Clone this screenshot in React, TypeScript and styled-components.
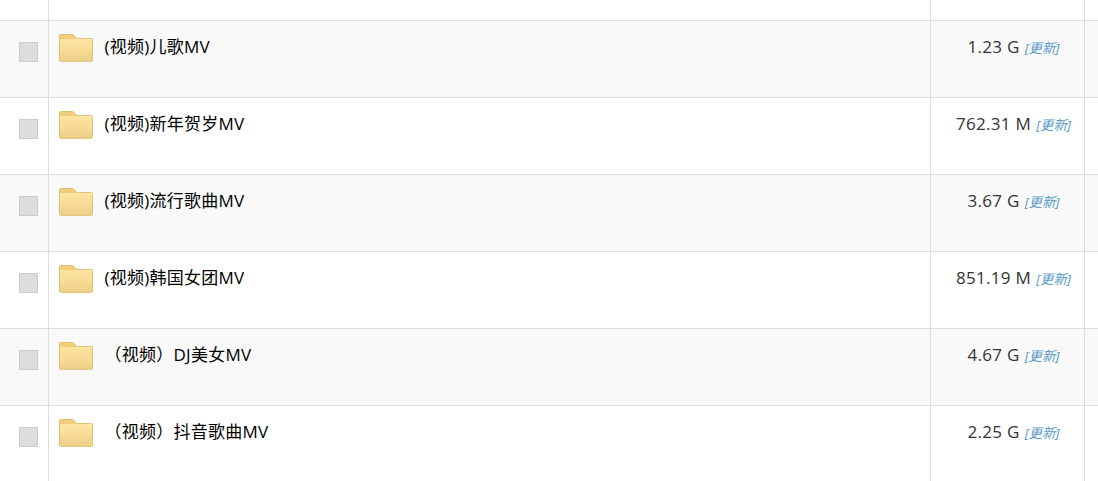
import styled, { createGlobalStyle } from "styled-components";

interface FolderRow {
    name: string;
    size: string;
}

const folders: FolderRow[] = [
    { name: "(视频)儿歌MV", size: "1.23 G" },
    { name: "(视频)新年贺岁MV", size: "762.31 M" },
    { name: "(视频)流行歌曲MV", size: "3.67 G" },
    { name: "(视频)韩国女团MV", size: "851.19 M" },
    { name: "（视频）DJ美女MV", size: "4.67 G" },
    { name: "（视频）抖音歌曲MV", size: "2.25 G" },
];

function FolderIcon() {
    return (
        <Folder width="34" height="28" viewBox="0 0 34 28">
            <defs>
                <linearGradient id="front" x1="0" y1="0" x2="0" y2="1">
                    <stop offset="0" stopColor="#fde4a1" />
                    <stop offset="0.5" stopColor="#f8db95" />
                    <stop offset="1" stopColor="#eccf88" />
                </linearGradient>
            </defs>
            <path d="M0.5 26V1.5Q0.5 0.5 1.5 0.5H13.2Q14 0.5 14.8 1.3L17.8 4.5H32.5Q33.5 4.5 33.5 5.5V26Q33.5 27.3 32.3 27.3H1.7Q0.5 27.3 0.5 26Z" fill="#eecf77" />
            <path d="M1 5.4H15.8L17.5 5H33V27H1Z" fill="url(#front)" />
            <path d="M1 5.9H16L18 5.5H33" fill="none" stroke="#fde8a8" />
            <path d="M0.5 26V1.5Q0.5 0.5 1.5 0.5H13.2Q14 0.5 14.8 1.3L17.8 4.5H32.5Q33.5 4.5 33.5 5.5V26Q33.5 27.3 32.3 27.3H1.7Q0.5 27.3 0.5 26Z" fill="none" stroke="#e2c078" />
        </Folder>
    );
}

export default function App() {
    return (
        <FileTable>
            <GlobalStyle />
            <Row $short>
                <CheckCell />
                <NameCell />
                <SizeCell />
                <EndCell />
            </Row>
            {folders.map((folder, i) => (
                <Row key={folder.name} $striped={i % 2 === 0}>
                    <CheckCell>
                        <Checkbox />
                    </CheckCell>
                    <NameCell>
                        <FolderIcon />
                        <FolderName>{folder.name}</FolderName>
                    </NameCell>
                    <SizeCell>
                        <SizeText>{folder.size}</SizeText>
                        <Refresh>[更新]</Refresh>
                    </SizeCell>
                    <EndCell />
                </Row>
            ))}
        </FileTable>
    );
}

const GlobalStyle = createGlobalStyle`
    body {
        margin: 0;
        background: #fff;
        overflow: hidden;
        font-family: "Open Sans", "Noto Sans CJK SC", sans-serif;
    }
    * {
        box-sizing: border-box;
    }
`;
const FileTable = styled.div`
    width: 100%;
    height: 481px;
    overflow: hidden;
`;
const Row = styled.div<{ $striped?: boolean; $short?: boolean }>`
    display: grid;
    grid-template-columns: 49px 882px 154px 1fr;
    height: ${(p) => (p.$short ? 21 : 77)}px;
    border-bottom: 1px solid #ddd;
    background: ${(p) => (p.$striped ? "#f9f9f9" : "#fff")};
`;
const Cell = styled.div`
    display: flex;
    align-items: flex-start;
    border-right: 1px solid #ddd;
`;
const CheckCell = styled(Cell)`
    padding: 21px 0 0 19px;
`;
const NameCell = styled(Cell)`
    padding: 13px 0 0 10px;
`;
const SizeCell = styled(Cell)`
    justify-content: center;
    padding: 13px 0 0 12px;
    white-space: nowrap;
`;
const EndCell = styled.div``;
const Checkbox = styled.span`
    width: 19px;
    height: 20px;
    border: 1px solid #ccc;
    background: #ddd;
`;
const Folder = styled.svg`
    flex: none;
`;
const FolderName = styled.span`
    margin-left: 11.5px;
    color: #000;
    font-size: 17px;
    line-height: 26px;
    letter-spacing: 0.25px;
`;
const SizeText = styled.span`
    color: #333;
    font-size: 17px;
    line-height: 26px;
    letter-spacing: 0.3px;
`;
const Refresh = styled.em`
    margin-left: 5px;
    color: #5a9bc8;
    font-size: 13.5px;
    line-height: 28px;
`;
